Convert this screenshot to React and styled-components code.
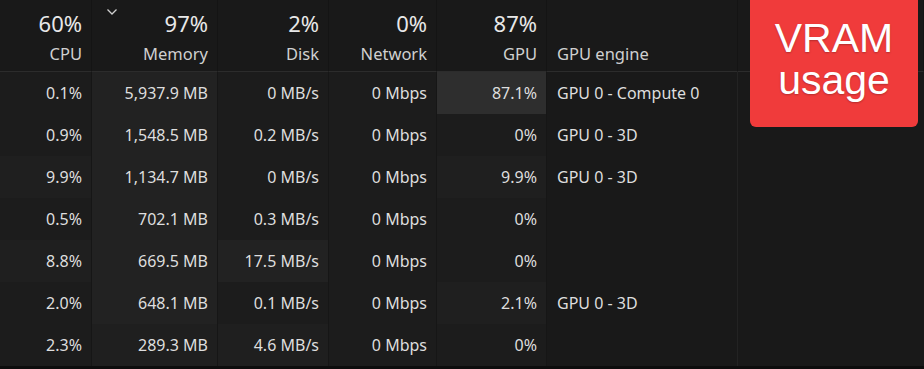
import React from 'react'
import styled, { createGlobalStyle } from 'styled-components'

const Global = createGlobalStyle`
  html, body {
    margin: 0;
    padding: 0;
    background: #0d0d0d;
  }
  body {
    font-family: "Noto Sans", "Open Sans", sans-serif;
  }
`

const columns = [
  { key: 'cpu', label: 'CPU', pct: '60%' },
  { key: 'mem', label: 'Memory', pct: '97%', sorted: true },
  { key: 'disk', label: 'Disk', pct: '2%' },
  { key: 'net', label: 'Network', pct: '0%' },
  { key: 'gpu', label: 'GPU', pct: '87%' },
]

// heat: 0 = plain, 1 = light, 2 = lighter, 3 = hot
const rows = [
  { cpu: ['0.1%', 0], mem: ['5,937.9 MB', 2], disk: ['0 MB/s', 0], net: ['0 Mbps', 0], gpu: ['87.1%', 3], engine: 'GPU 0 - Compute 0' },
  { cpu: ['0.9%', 0], mem: ['1,548.5 MB', 2], disk: ['0.2 MB/s', 0], net: ['0 Mbps', 0], gpu: ['0%', 0], engine: 'GPU 0 - 3D' },
  { cpu: ['9.9%', 1], mem: ['1,134.7 MB', 2], disk: ['0 MB/s', 0], net: ['0 Mbps', 0], gpu: ['9.9%', 1], engine: 'GPU 0 - 3D' },
  { cpu: ['0.5%', 0], mem: ['702.1 MB', 2], disk: ['0.3 MB/s', 0], net: ['0 Mbps', 0], gpu: ['0%', 0], engine: '' },
  { cpu: ['8.8%', 1], mem: ['669.5 MB', 2], disk: ['17.5 MB/s', 2], net: ['0 Mbps', 0], gpu: ['0%', 0], engine: '' },
  { cpu: ['2.0%', 0], mem: ['648.1 MB', 2], disk: ['0.1 MB/s', 0], net: ['0 Mbps', 0], gpu: ['2.1%', 1], engine: 'GPU 0 - 3D' },
  { cpu: ['2.3%', 0], mem: ['289.3 MB', 1], disk: ['4.6 MB/s', 1], net: ['0 Mbps', 0], gpu: ['0%', 0], engine: '' },
]

const heatBg = ['#1c1c1c', '#1f1f1f', '#222222', '#2e2e2e']

const Screen = styled.div`
  position: relative;
  width: 924px;
  height: 369px;
  overflow: hidden;
  background: #0d0d0d;
`

const Table = styled.div`
  display: grid;
  grid-template-columns: 92px 126px 111px 108px 110px 191px 1fr;
  grid-template-rows: 72px repeat(7, 42px);
  height: 366px;
  background: #191919;
  color: #dadada;
`

const HeadCell = styled.div`
  display: flex;
  flex-direction: column;
  align-items: ${p => (p.$left ? 'flex-start' : 'flex-end')};
  justify-content: flex-end;
  position: relative;
  padding: 0 9px 7px 10px;
  border-right: 1px solid #141414;
  border-bottom: 1px solid #2c2c2c;
  background: #191919;
`

const Pct = styled.div`
  font-size: 22px;
  line-height: 28px;
  color: #e8e8e8;
  margin-bottom: 7px;
`

const Label = styled.div`
  font-size: 16.5px;
  line-height: 20px;
  color: #d0d0d0;
`

const Chevron = styled.svg`
  position: absolute;
  left: 14px;
  top: 8px;
`

const Cell = styled.div`
  display: flex;
  align-items: center;
  justify-content: ${p => (p.$left ? 'flex-start' : 'flex-end')};
  padding: 0 9px 0 10px;
  font-size: 16px;
  color: #dedede;
  white-space: nowrap;
  background: ${p => heatBg[p.$heat || 0]};
  border-right: 1px solid #161616;
`

const EngineCell = styled(Cell)`
  background: #191919;
  border-right: 1px solid ${p => (p.$edge ? '#232323' : '#191919')};
`

const Badge = styled.div`
  position: absolute;
  left: 750px;
  top: -8px;
  width: 168px;
  height: 135px;
  border-radius: 6px;
  background: #f03b3b;
  color: #fff;
  font-family: "Liberation Sans", Arial, sans-serif;
  font-size: 41px;
  line-height: 42px;
  display: flex;
  flex-direction: column;
  align-items: center;
  justify-content: center;
  padding-bottom: 1px;
  box-sizing: border-box;
  text-shadow: 0 1px 2px rgba(0, 0, 0, 0.25);
`

export default function App() {
  return (
    <Screen>
      <Global />
      <Table>
        {columns.map(c => (
          <HeadCell key={c.key}>
            {c.sorted && (
              <Chevron width="12" height="8" viewBox="0 0 12 8">
                <path d="M1.5 1.5 L6 6 L10.5 1.5" fill="none" stroke="#cfcfcf" strokeWidth="1.3" />
              </Chevron>
            )}
            <Pct>{c.pct}</Pct>
            <Label>{c.label}</Label>
          </HeadCell>
        ))}
        <HeadCell $left>
          <Label>GPU engine</Label>
        </HeadCell>
        <HeadCell $left />
        {rows.map((r, i) => (
          <React.Fragment key={i}>
            {columns.map(c => (
              <Cell key={c.key} $heat={r[c.key][1]}>{r[c.key][0]}</Cell>
            ))}
            <EngineCell $left $edge>{r.engine}</EngineCell>
            <EngineCell />
          </React.Fragment>
        ))}
      </Table>
      <Badge>
        <span>VRAM</span>
        <span>usage</span>
      </Badge>
    </Screen>
  )
}
